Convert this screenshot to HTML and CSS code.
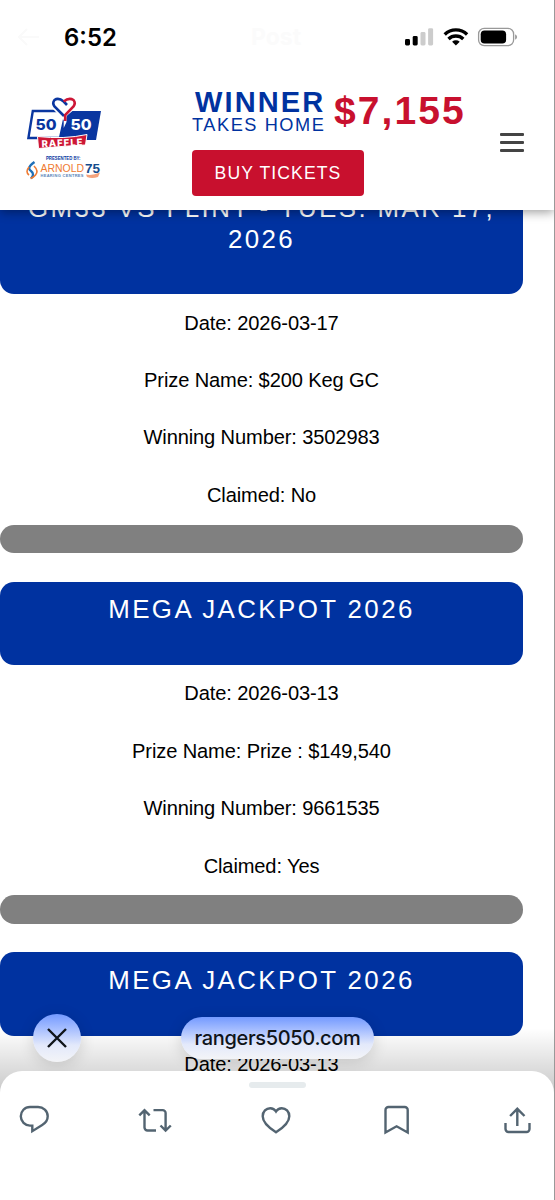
FILE: index.html
```html
<!DOCTYPE html>
<html lang="en">
<head>
    <meta charset="UTF-8">
    <meta name="viewport" content="width=device-width, initial-scale=1.0">
    <title>Rangers 50/50 Raffle - Winners</title>
    <link rel="stylesheet" href="styles.css">
</head>
<body>
    <div class="screen">
        <div class="top">
            <div class="status-bar">
                <svg class="back" width="24" height="20" viewBox="0 0 24 20"><path d="M22 10H2M10 2L2 10l8 8"/></svg>
                <span class="time">6:52</span>
                <span class="post-title">Post</span>
                <svg class="status-icons" width="114" height="22" viewBox="0 0 114 22">
                    <rect x="1" y="13" width="5" height="6.5" rx="1.4"/>
                    <rect x="8.7" y="10" width="5" height="9.5" rx="1.4"/>
                    <rect x="16.5" y="6" width="5" height="13.5" rx="1.4" fill="#ccc"/>
                    <rect x="24.1" y="2.2" width="5" height="17.3" rx="1.4" fill="#ccc"/>
                    <g fill="none" stroke="#000" stroke-width="3.4">
                        <path d="M40.7 8.4a16.2 16.2 0 0 1 22.4 0"/>
                        <path d="M44.5 13a10.8 10.8 0 0 1 14.8 0"/>
                    </g>
                    <path d="M51.9 19.6l-3.8-3.8a5.6 5.6 0 0 1 7.6 0z"/>
                    <rect x="74.6" y="2.4" width="35" height="17.2" rx="5.6" fill="none" stroke="#999" stroke-width="1.3"/>
                    <rect x="76.7" y="4.4" width="25.4" height="13.2" rx="3.8"/>
                    <path d="M111.1 8.2q2 1 2 2.8t-2 2.8z" fill="#999"/>
                </svg>
            </div>
            <header class="site-header">
                <svg class="logo" width="78" height="86" viewBox="0 0 78 86">
                    <path d="M6.8 15H40L34 42H2.4z" fill="#fff" stroke="#0a36a0" stroke-width="2.4"/>
                    <path d="M43 15H75L70 44H34.500L36 31z" fill="#0a36a0"/>
                    <path d="M37.700 32L40.500 26V20L50 12V2H26V12L37.700 24z" fill="#fff"/>
                    <path d="M38 20L28.500 10.500Q26 7 28.500 4Q32.500 1 37.700 5.500L41 9" fill="none" stroke="#0a36a0" stroke-width="2.600"/>
                    <path d="M37.700 5.500Q43 1 47.500 4Q50 7 47.500 10.500L39.200 19V25" fill="none" stroke="#cd1736" stroke-width="2.600"/>
                    <path d="M11.500 40.500Q38 43.500 61 38.500L59.500 49Q38 50 12.500 52.500z" fill="#cd1736" stroke="#fff" stroke-width="1"/>
                    <text x="9.500" y="34.300" class="logo-num" fill="#0a36a0" textLength="21" lengthAdjust="spacingAndGlyphs">50</text>
                    <text x="44.500" y="34.300" class="logo-num" fill="#fff" textLength="21" lengthAdjust="spacingAndGlyphs">50</text>
                    <text x="15.500" y="50.300" class="logo-raffle" textLength="41" transform="rotate(-2.500 36 47)">RAFFLE</text>
                    <text x="20" y="63.800" class="logo-presented" textLength="34.500" lengthAdjust="spacingAndGlyphs">PRESENTED BY:</text>
                    <path d="M8.500 66Q0 72 5 75Q9 78 5 82.500" fill="none" stroke="#2070b8" stroke-width="2.300"/>
                    <path d="M8 70Q13 75 9.500 79Q8 81 4.500 82.500M3 71Q-1 76 3 79" fill="none" stroke="#ef7b32" stroke-width="1.600"/>
                    <text x="14.500" y="76" class="logo-arnold" textLength="43.500" lengthAdjust="spacingAndGlyphs">ARNOLD</text>
                    <text x="14.500" y="81" class="logo-hearing" textLength="43">HEARING CENTRES</text>
                    <text x="59" y="77" class="logo-75" textLength="15" lengthAdjust="spacingAndGlyphs">75</text>
                    <path d="M60 78.500Q66 80 74 76.500L72 81Q66 83 61 81z" fill="#f5a27b"/>
                </svg>
                <div class="promo">
                    <div class="prize">
                        <div class="prize-label">
                            <div class="winner">WINNER</div>
                            <div class="takes-home">TAKES HOME</div>
                        </div>
                        <div class="amount">$7,155</div>
                    </div>
                    <a class="buy">BUY TICKETS</a>
                </div>
                <div class="menu"><span></span><span></span><span></span></div>
            </header>
        </div>

        <main class="winners">
            <section class="draw">
                <h2>GM33 VS FLINT - TUES. MAR 17, 2026</h2>
                <p>Date: 2026-03-17</p>
                <p>Prize Name: $200 Keg GC</p>
                <p>Winning Number: 3502983</p>
                <p>Claimed: No</p>
                <div class="divider"></div>
            </section>
            <section class="draw">
                <h2>MEGA JACKPOT 2026</h2>
                <p>Date: 2026-03-13</p>
                <p>Prize Name: Prize : $149,540</p>
                <p>Winning Number: 9661535</p>
                <p>Claimed: Yes</p>
                <div class="divider"></div>
            </section>
            <section class="draw">
                <h2>MEGA JACKPOT 2026</h2>
                <p>Date: 2026-03-13</p>
            </section>
        </main>

        <div class="shade"></div>
        <div class="close">
            <svg width="20" height="20" viewBox="0 0 20 20"><path d="M1 1l18 18M19 1L1 19"/></svg>
        </div>
        <div class="site-url">rangers5050.com</div>

        <div class="sheet">
            <div class="handle"></div>
            <div class="actions">
                <svg width="34" height="34" viewBox="0 0 34 34"><path d="M13 5h8c5.300 0 9.700 4 9.700 9.300 0 3.700-2.300 6.800-5.500 8.700l-9.900 6.200v-5.600H13c-5 0-9.200-4.200-9.200-9.300S7.700 5 13 5z"/></svg>
                <svg width="34" height="34" viewBox="0 0 34 34"><path d="M1.300 13.400l5.200-5.100 5.200 5.100M6.500 9v16.500a3 3 0 0 0 3 3H18M15.500 8.100h9.100a3 3 0 0 1 3 3v16.500M22.500 23.500l5.100 5 5.200-5"/></svg>
                <svg width="34" height="34" viewBox="0 0 34 34"><path d="M17 9.500C15.500 7 13.300 6.200 11.200 6.200c-4 0-7.500 3.300-7.500 8.100 0 5.700 5 10.800 13.300 16 8.300-5.200 13.300-10.300 13.300-16 0-4.800-3.500-8.100-7.500-8.100-2.100 0-4.300.8-5.800 3.300z"/></svg>
                <svg width="34" height="34" viewBox="0 0 34 34"><path d="M6.500 8a3 3 0 0 1 3-3h16.200a3 3 0 0 1 3 3v22.500L17.600 24.300 6.500 30.500z"/></svg>
                <svg width="34" height="34" viewBox="0 0 34 34"><path d="M17.300 24V7M10.100 14l7.200-7.200 7.200 7.200M5.500 21v6a3 3 0 0 0 3 3h18a3 3 0 0 0 3-3v-6"/></svg>
            </div>
        </div>
    </div>
</body>
</html>
```

FILE: styles.css
```css
body {
    margin: 0;
    background-color: #fff;
    font-family: "Liberation Sans", Arial, sans-serif;
}

.screen {
    position: relative;
    width: 555px;
    height: 1200px;
    box-sizing: border-box;
    border-right: 1px solid #999;
    overflow: hidden;
}

.top {
    position: relative;
    z-index: 2;
    height: 210px;
    background-color: #fff;
    box-shadow: 0 2px 10px rgba(0,0,0,0.4);
}

.status-bar {
    display: flex;
    align-items: center;
    height: 74px;
    padding: 0 36px 0 17px;
}

.back {
    fill: none;
    stroke: #fafafa;
    stroke-width: 2;
}

.time {
    margin-left: 23px;
    width: 187px;
    font-family: Inter, sans-serif;
    font-size: 23.9px;
    font-weight: 600;
}

.post-title {
    flex: 1;
    font-family: Inter, sans-serif;
    font-size: 23px;
    font-weight: 700;
    color: #fbfbfb;
}

.site-header {
    display: flex;
    height: 136px;
}

.logo {
    margin: 22px 0 0 26px;
    overflow: visible;
}

.logo-num {
    font-family: Inter, sans-serif;
    font-size: 15px;
    font-weight: 800;
}

.logo-raffle {
    font-family: Inter, sans-serif;
    font-size: 9.5px;
    font-weight: 800;
    fill: #fff;
}

.logo-presented {
    font-size: 4.6px;
    font-weight: bold;
    fill: #0a36a0;
}

.logo-arnold {
    font-size: 11px;
    fill: #ef7b32;
}

.logo-hearing {
    font-size: 4px;
    font-weight: bold;
    fill: #5a86b8;
}

.logo-75 {
    font-size: 13.5px;
    font-weight: bold;
    fill: #154b8c;
}

.promo {
    margin: 14px 0 0 88px;
    width: 274px;
}

.prize {
    display: flex;
    height: 62px;
}

.prize-label {
    width: 142px;
    color: #0032a0;
}

.winner {
    padding-left: 3px;
    font-size: 29px;
    font-weight: bold;
    line-height: 28px;
    letter-spacing: 2.1px;
}

.takes-home {
    font-size: 18.2px;
    line-height: 18px;
    letter-spacing: 1.55px;
    white-space: nowrap;
}

.amount {
    font-size: 39px;
    font-weight: bold;
    line-height: 46px;
    letter-spacing: 2.1px;
    color: #c8102e;
}

.buy {
    display: block;
    width: 172px;
    height: 46px;
    border-radius: 4px;
    background-color: #c8102e;
    color: #fff;
    font-size: 17.6px;
    line-height: 46px;
    letter-spacing: 1.1px;
    text-align: center;
}

.menu {
    display: flex;
    flex-direction: column;
    gap: 5.6px;
    margin: 59px 0 0 34px;
}

.menu span {
    width: 24px;
    height: 2.6px;
    border-radius: 1px;
    background-color: #444;
}

.winners {
    width: 523px;
    margin-top: -30.3px;
}

.draw {
    margin-bottom: 28.6px;
    font-size: 20.1px;
    line-height: 28.7px;
    letter-spacing: -0.13px;
    text-align: center;
}

.draw h2 {
    margin: 0 0 14.7px;
    padding: 12.8px 20px 39.4px;
    border-radius: 14px;
    background-color: #0032a0;
    color: #fff;
    font-size: 25.9px;
    font-weight: normal;
    line-height: 31px;
    letter-spacing: 2.4px;
}

.draw p {
    margin: 0 0 28.7px;
}

.divider {
    height: 28.4px;
    margin-top: -13.6px;
    border-radius: 14.2px;
    background-color: #808080;
}

.shade {
    position: absolute;
    left: 0;
    right: 0;
    bottom: 100px;
    height: 72px;
    background: linear-gradient(rgba(0,0,0,0), rgba(0,0,0,0.24));
}

.close,
.site-url {
    position: absolute;
    display: flex;
    align-items: center;
    justify-content: center;
    background: linear-gradient(#749aff, #a5bdff 30%, #e3e9fb 65%, #f3f4f7);
    box-shadow: 0 3px 16px rgba(0,0,0,0.14);
}

.close {
    left: 33px;
    top: 1014px;
    width: 48px;
    height: 48px;
    border-radius: 50%;
}

.close svg {
    fill: none;
    stroke: #0f1419;
    stroke-width: 2.4;
}

.site-url {
    left: 181px;
    top: 1017px;
    width: 193px;
    height: 42px;
    border-radius: 21px;
    font-family: Inter, sans-serif;
    font-size: 20px;
    font-weight: 500;
    letter-spacing: -0.35px;
    color: #0f1419;
}

.sheet {
    position: absolute;
    left: 0;
    right: 0;
    bottom: 0;
    height: 129px;
    border-radius: 22px 22px 0 0;
    background-color: #fff;
}

.handle {
    width: 57px;
    height: 6px;
    margin: 11px auto 0;
    border-radius: 3px;
    background-color: #e6ebed;
}

.actions {
    display: flex;
    justify-content: space-between;
    padding: 14px 20px 0 17px;
}

.actions svg {
    fill: none;
    stroke: #536471;
    stroke-width: 2.4;
}
```
